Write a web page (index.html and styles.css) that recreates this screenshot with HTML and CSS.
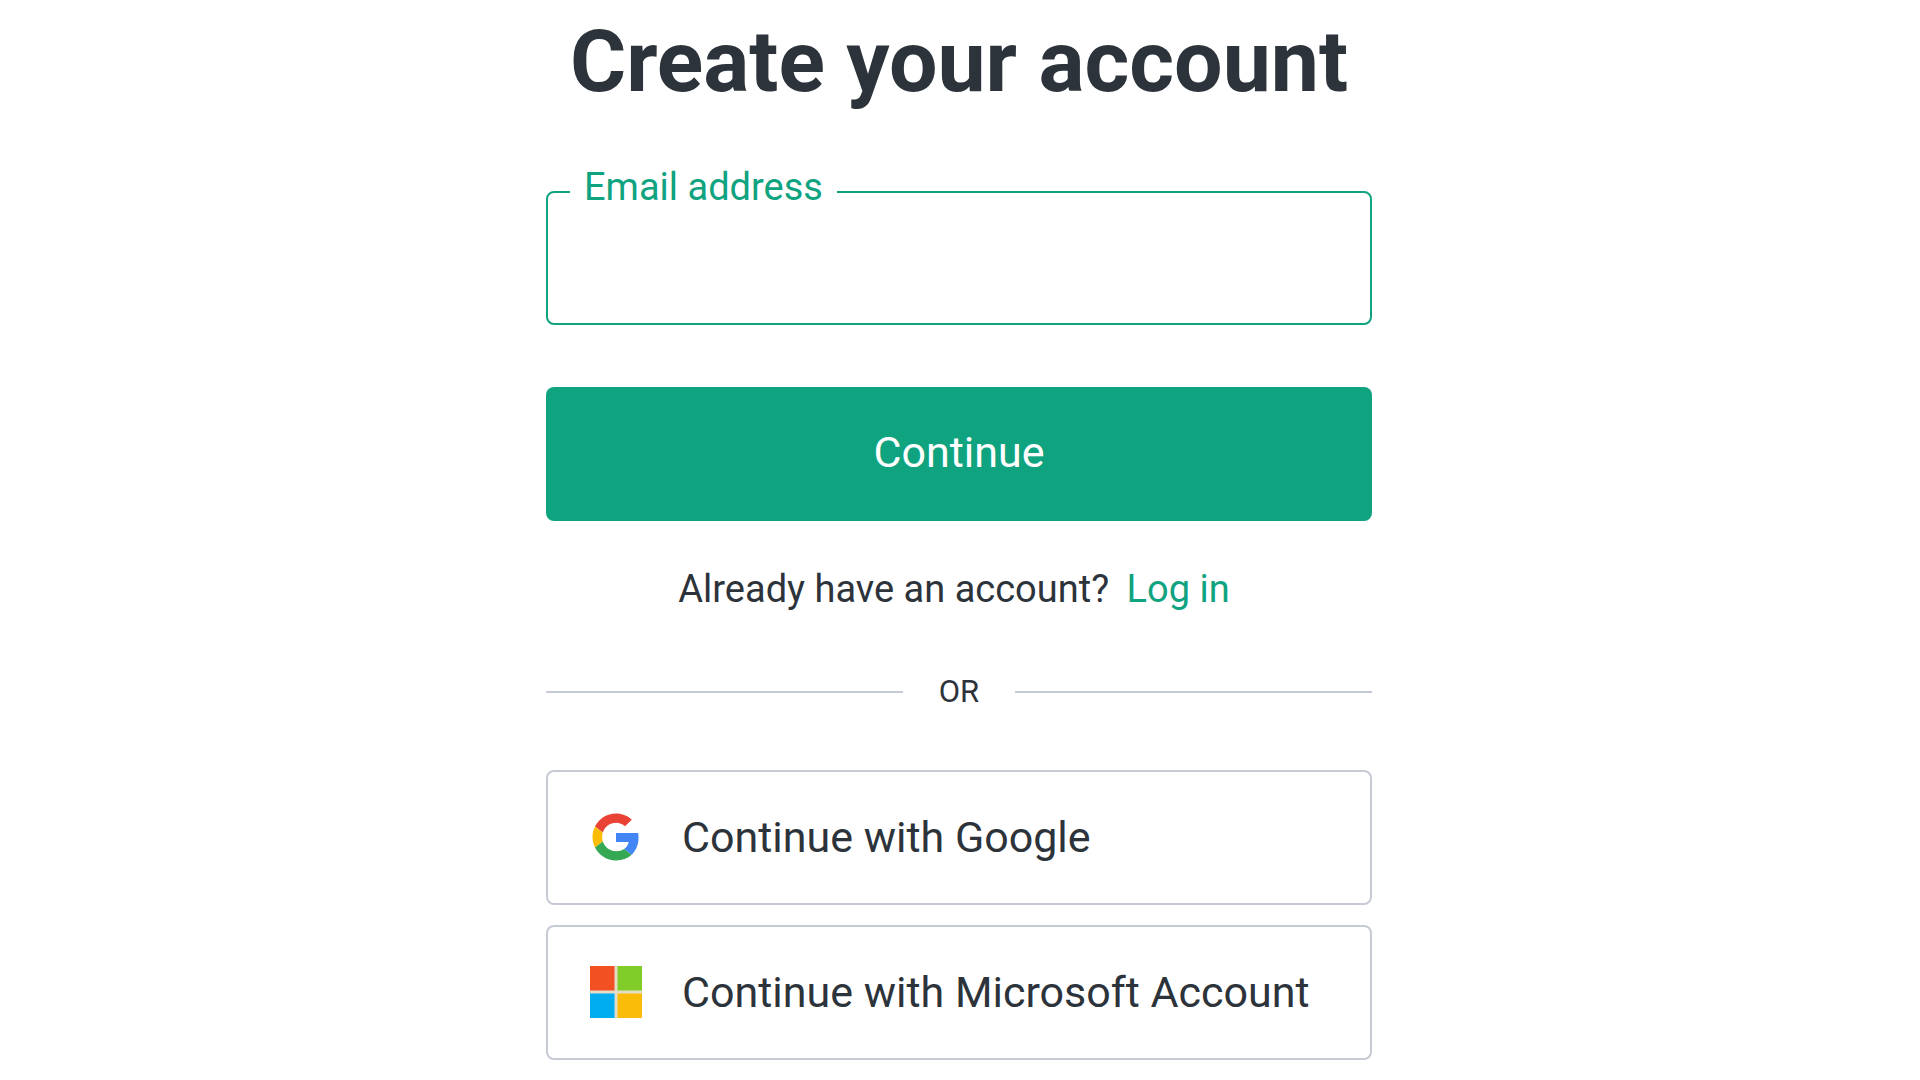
FILE: index.html
```html
<!DOCTYPE html>
<html lang="en">
<head>
<meta charset="utf-8">
<meta name="viewport" content="width=device-width, initial-scale=1">
<title>Create your account</title>
<link rel="stylesheet" href="styles.css">
</head>
<body>
<main class="signup">
  <h1 class="title">Create your account</h1>
  <form class="form">
    <div class="field">
      <input class="field-input" id="email" name="email" type="email" autocomplete="email">
      <label class="field-label" for="email">Email address</label>
    </div>
    <button class="submit" type="submit">Continue</button>
  </form>
  <p class="login">Already have an account? <a class="login-link" href="#login">Log in</a></p>
  <div class="divider"><span>OR</span></div>
  <div class="providers">
    <button class="provider" type="button">
      <svg class="provider-icon" viewBox="0 0 52 52" aria-hidden="true">
        <g transform="translate(2.5 2.5) scale(.98)">
          <path fill="#EA4335" d="M24 9.5c3.54 0 6.71 1.22 9.21 3.6l6.85-6.85C35.9 2.38 30.47 0 24 0 14.62 0 6.51 5.38 2.56 13.22l7.98 6.19C12.43 13.72 17.74 9.5 24 9.5z"/>
          <path fill="#4285F4" d="M46.98 24.55c0-1.57-.15-3.09-.38-4.55H24v9.02h12.94c-.58 2.96-2.26 5.48-4.78 7.18l7.73 6c4.51-4.18 7.09-10.36 7.09-17.65z"/>
          <path fill="#FBBC05" d="M10.53 28.59c-.48-1.45-.76-2.99-.76-4.59s.27-3.14.76-4.59l-7.98-6.19C.92 16.46 0 20.12 0 24c0 3.88.92 7.54 2.56 10.78l7.97-6.19z"/>
          <path fill="#34A853" d="M24 48c6.48 0 11.93-2.13 15.89-5.81l-7.73-6c-2.15 1.45-4.92 2.3-8.16 2.3-6.26 0-11.57-4.22-13.47-9.91l-7.98 6.19C6.51 42.62 14.62 48 24 48z"/>
        </g>
      </svg>
      <span>Continue with Google</span>
    </button>
    <button class="provider" type="button">
      <svg class="provider-icon" viewBox="0 0 52 52" aria-hidden="true">
        <path fill="#e3dcc6" d="M0 24h52v4H0zM24 0h4v52h-4z"/>
        <path fill="#F25022" d="M0 0h24.5v24.5H0z"/>
        <path fill="#80CC28" d="M27.5 0H52v24.5H27.5z"/>
        <path fill="#00ADEF" d="M0 27.5h24.5V52H0z"/>
        <path fill="#FBBC09" d="M27.5 27.5H52V52H27.5z"/>
      </svg>
      <span>Continue with Microsoft Account</span>
    </button>
  </div>
</main>
</body>
</html>
```
FILE: styles.css
```css
:root {
  --green: #10a37f;
  --ink: #2d333a;
  --line: #c5cad5;
}

* {
  box-sizing: border-box;
}

body {
  margin: 0;
  padding-right: 2px;
  background: #fff;
  color: var(--ink);
  font-family: Roboto, "Liberation Sans", sans-serif;
}

button,
input {
  font: inherit;
  color: inherit;
}

.signup {
  max-width: 826px;
  margin: 0 auto;
  padding: 12px 0 20px;
}

.title {
  margin: 0 0 79px;
  font-size: 86px;
  font-weight: 700;
  line-height: 100px;
  text-align: center;
}

.form {
  display: flex;
  flex-direction: column;
  gap: 62px;
}

.field {
  position: relative;
}

.field-input {
  display: block;
  width: 100%;
  height: 134px;
  padding: 0 36px;
  border: 2px solid var(--green);
  border-radius: 8px;
  background: #fff;
  font-size: 43px;
  outline: 0;
}

.field-label {
  position: absolute;
  top: -24px;
  left: 24px;
  padding: 0 14px;
  background: #fff;
  color: var(--green);
  font-size: 38px;
  line-height: 40px;
}

.submit {
  height: 134px;
  padding: 0 0 4px;
  border: 0;
  border-radius: 8px;
  background: var(--green);
  color: #fff;
  font-size: 43px;
  cursor: pointer;
}

.login {
  margin: 44px 0 0;
  font-size: 38px;
  line-height: 48px;
  text-align: center;
}

.login-link {
  margin: 0 10px 0 8px;
  color: var(--green);
  text-decoration: none;
}

.divider {
  display: flex;
  align-items: center;
  gap: 36px;
  margin: 55px 0 54px;
  font-size: 31px;
  line-height: 48px;
}

.divider::before,
.divider::after {
  content: "";
  flex: 1;
  height: 2px;
  background: var(--line);
}

.providers {
  display: flex;
  flex-direction: column;
  gap: 20px;
}

.provider {
  display: flex;
  align-items: center;
  gap: 40px;
  height: 135px;
  padding: 0 42px 2px;
  border: 2px solid var(--line);
  border-radius: 8px;
  background: #fff;
  font-size: 43px;
  text-align: left;
  cursor: pointer;
}

.provider-icon {
  flex: none;
  width: 52px;
  height: 52px;
}
```
